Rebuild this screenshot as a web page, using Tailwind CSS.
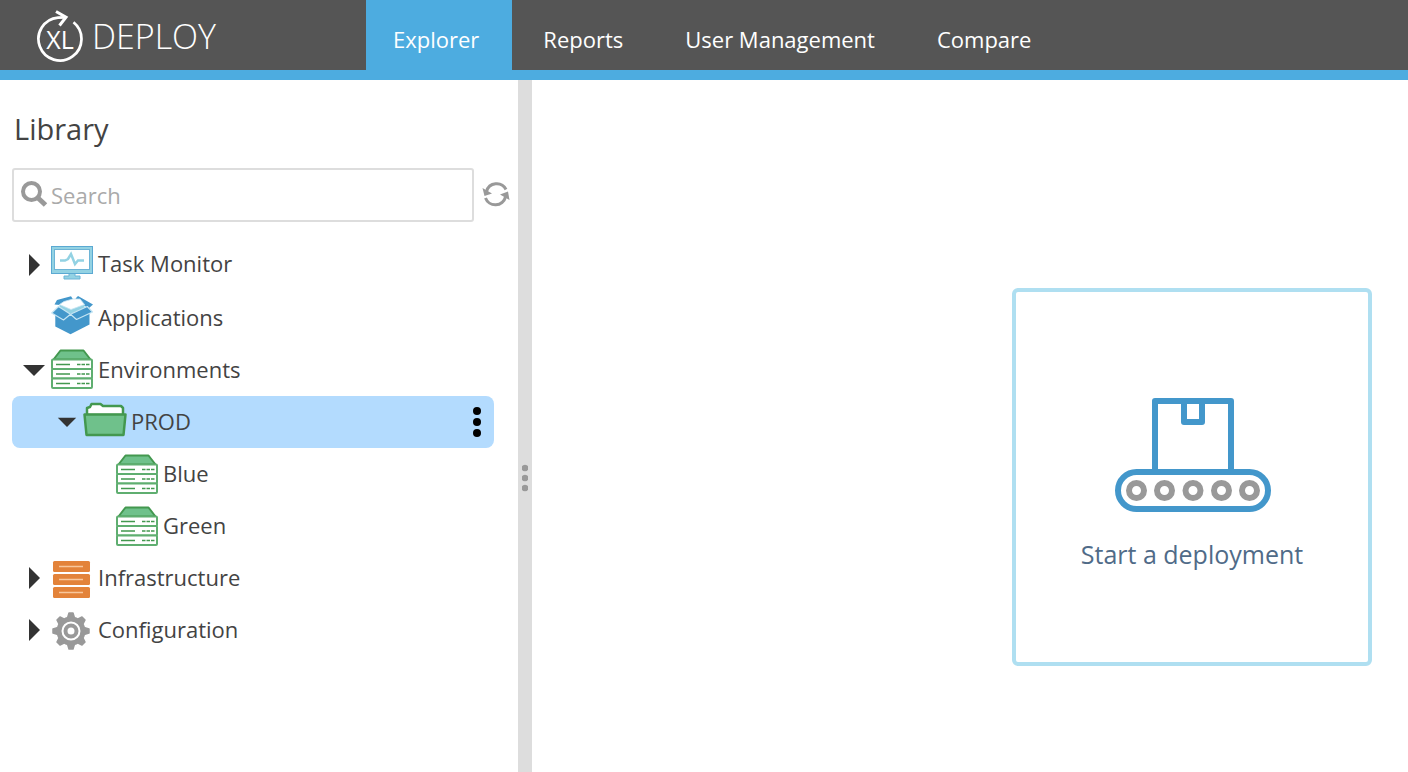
<!DOCTYPE html>
<html lang="en">
<head>
<meta charset="utf-8">
<meta name="viewport" content="width=device-width, initial-scale=1">
<title>XL Deploy</title>
<script src="https://cdn.jsdelivr.net/npm/@tailwindcss/browser@4"></script>
</head>
<body class="flex min-h-screen flex-col bg-white font-['Open_Sans',sans-serif] text-[22px] text-[#434343]">
<svg class="hidden" aria-hidden="true">
  <symbol id="servers" viewBox="0 0 43 40">
    <path d="M2.500 10.500 9.500 1.500h23L39.500 10.500z" fill="#6fc18b" stroke="#43984f" stroke-width="2" stroke-linejoin="round"/>
    <g fill="#fff" stroke="#5fae70" stroke-width="2">
      <rect x="1" y="10.500" width="40" height="9.500" rx="1"/>
      <rect x="1" y="20" width="40" height="9.500" rx="1"/>
      <rect x="1" y="29.500" width="40" height="9.500" rx="1"/>
    </g>
    <path d="M5 15.500h14M5 25h14M5 34.500h14" stroke="#43984f" stroke-width="1.700"/>
    <path d="M26 15.500h13M26 25h13M26 34.500h13" stroke="#43984f" stroke-width="1.700" stroke-dasharray="3.500 1"/>
  </symbol>
  <symbol id="right" viewBox="0 0 24 24"><path d="M7 1v22l11-11z" fill="#333"/></symbol>
  <symbol id="down" viewBox="0 0 24 24"><path d="M1 7h22L12 18z" fill="#333"/></symbol>
</svg>

<header class="flex h-20 border-b-[10px] border-[#4dace0] bg-[#555]">
  <a href="#" aria-label="XL Deploy" class="flex w-[366px] shrink-0 items-center pl-9 text-white">
    <svg class="h-[70px] w-12" viewBox="0 0 48 70" fill="none" stroke="#fff" stroke-width="2.700">
      <path d="M37.500 22.300A21.500 21.500 0 1 1 22 17.600L29 17.300"/>
      <path d="M20 11.500 30 17.300 23.500 25.500" stroke-width="3"/>
      <text x="24" y="49" text-anchor="middle" font-size="25" fill="#fff" stroke="none">XL</text>
    </svg>
    <span class="pl-2 pt-0.5 text-[34px] leading-none font-light">DEPLOY</span>
  </a>
  <nav class="flex items-stretch font-medium text-white" aria-label="Main">
    <a href="#" aria-current="page" class="flex items-center bg-[#4dace0] pt-2 pr-[33px] pl-[27px]">Explorer</a>
    <a href="#" class="flex items-center px-[31px] pt-2">Reports</a>
    <a href="#" class="flex items-center px-[31px] pt-2">User Management</a>
    <a href="#" class="flex items-center px-[31px] pt-2">Compare</a>
  </nav>
</header>

<div class="flex flex-1">
  <aside class="w-[518px] shrink-0 pt-[27px]">
    <h1 class="pl-3.5 text-[29px] leading-[44px]">Library</h1>
    <div class="mt-[17px] flex items-center gap-2 pr-2 pl-3">
      <div class="flex h-[54px] flex-1 items-center rounded-[3px] border-2 border-[#ddd] pl-[7px]">
        <svg class="size-7 shrink-0" viewBox="0 0 28 28" fill="none" stroke="#999" aria-hidden="true"><circle cx="10.500" cy="10.500" r="8.500" stroke-width="4"/><path d="m16.500 16.500 8 7.500" stroke-width="5"/></svg>
        <input type="search" aria-label="Search" placeholder="Search" class="min-w-0 flex-1 pl-0.5 outline-none placeholder:text-[#aaa]">
      </div>
      <button type="button" aria-label="Refresh" class="mb-0.5 size-7">
        <svg viewBox="0 0 28 28" fill="none" stroke="#999" stroke-width="3"><path d="M4.500 11.500A10.500 10.500 0 0 1 24 9.500M23.500 17A10.500 10.500 0 0 1 3.500 18"/><path d="M.500 8 2.500 16l7.500-2.500zM27.500 20l-1.500-8.500-8 3z" fill="#999" stroke="none"/></svg>
      </button>
    </div>

    <ul class="mt-4 pr-6 pl-3 leading-[30px]">
      <li class="flex h-[54px] items-center pl-2.5">
        <button type="button" aria-label="Expand Task Monitor" class="mr-[5px] size-6"><svg viewBox="0 0 24 24"><use href="#right"/></svg></button>
        <svg class="mr-1 h-10 w-[43px]" viewBox="0 0 43 40" aria-hidden="true">
          <path d="M18 28h6v3h5v3H13v-3h5z" fill="#93d2e3" stroke="#6db4d6"/>
          <rect x=".5" y="1.500" width="41" height="27" fill="#93d2e3" stroke="#5ba9d2"/>
          <rect x="3.500" y="4.500" width="35" height="20" fill="#fff" stroke="#6db4d6"/>
          <path d="M9 15.500h5l3-1.500 3-5 4 10 3-3.500h6" fill="none" stroke="#93d2e3" stroke-width="2.500"/>
        </svg>
        <span class="pb-1">Task Monitor</span>
      </li>
      <li class="flex h-[52px] items-center pl-[39px]">
        <svg class="mr-1 mb-1 h-10 w-[43px]" viewBox="0 0 43 40" aria-hidden="true">
          <path d="M3.500 8.500 6 4 20 .300l2 3L9 9zM24.500 2.500 27 0l15 8.500-4.500 4L31 8z" fill="#4397cb"/>
          <path d="M8.500 8v6l11 6L33.500 13V8z" fill="#93d2e3"/>
          <path d="M8.500 8.500 13 5.500 22 3h7l4.500 5.500L20 13.500z" fill="#fff" stroke="#c6e5f3" stroke-width=".8"/>
          <path d="M4.300 18 19.500 17.500 38.500 16v12.500L19.500 38.300 4.300 30.500z" fill="#4397cb"/>
          <path d="M7.500 10.500 19.500 18.300 12.500 24 .700 17zM19.500 18.300 36.300 10.500l5.200 5.500L25.500 23.500z" fill="#4397cb" stroke="#c6e5f3" stroke-width="1.200" stroke-linejoin="round"/>
        </svg>
        <span class="pb-0.5">Applications</span>
      </li>
      <li>
        <div class="flex h-[52px] items-center pl-2.5">
          <button type="button" aria-label="Collapse Environments" aria-expanded="true" class="mr-[5px] size-6"><svg viewBox="0 0 24 24"><use href="#down"/></svg></button>
          <svg class="mr-1 mb-0.5 h-10 w-[43px]" aria-hidden="true"><use href="#servers"/></svg>
          <span class="pb-0.5">Environments</span>
        </div>
        <ul>
          <li>
            <div class="flex h-[52px] items-center rounded-lg bg-[#b3dbfe] pr-2 pl-[43px]">
              <button type="button" aria-label="Collapse PROD" aria-expanded="true" class="mr-1 size-6 p-0.5"><svg viewBox="0 0 24 24"><use href="#down"/></svg></button>
              <svg class="mr-1 mb-1 h-9 w-11" viewBox="0 0 44 36" aria-hidden="true">
                <path d="M4 13V6l3-1 1.500-3h9L20 4h18l2 2v7z" fill="#fff" stroke="#43984f" stroke-width="2.500" stroke-linejoin="round"/>
                <path d="M1.500 12.500h41l-2 20.500h-37z" fill="#6fc18b" stroke="#43984f" stroke-width="2.500" stroke-linejoin="round"/>
              </svg>
              <span class="pb-0.5">PROD</span>
              <button type="button" aria-label="PROD actions" class="ml-auto h-8 w-[18px]"><svg viewBox="0 0 18 32"><circle cx="9" cy="5" r="4"/><circle cx="9" cy="16" r="4"/><circle cx="9" cy="27" r="4"/></svg></button>
            </div>
            <ul>
              <li class="flex h-[52px] items-center pl-[104px]"><svg class="mr-1 h-10 w-[43px]" aria-hidden="true"><use href="#servers"/></svg><span class="pb-0.5">Blue</span></li>
              <li class="flex h-[52px] items-center pl-[104px]"><svg class="mr-1 h-10 w-[43px]" aria-hidden="true"><use href="#servers"/></svg><span class="pb-0.5">Green</span></li>
            </ul>
          </li>
        </ul>
      </li>
      <li class="flex h-[52px] items-center pl-2.5">
        <button type="button" aria-label="Expand Infrastructure" class="mr-[5px] size-6"><svg viewBox="0 0 24 24"><use href="#right"/></svg></button>
        <svg class="mr-1 h-10 w-[43px]" viewBox="0 0 43 40" aria-hidden="true">
          <g fill="#e3833a"><rect x="2" y="3" width="37" height="11" rx="1.500"/><rect x="2" y="16" width="37" height="11" rx="1.500"/><rect x="2" y="29" width="37" height="11" rx="1.500"/></g>
          <path d="M8 8.500h24M8 21.500h24M8 34.500h24" stroke="#f8c79c" stroke-width="1.700"/>
        </svg>
        <span class="pb-0.5">Infrastructure</span>
      </li>
      <li class="flex h-[52px] items-center pl-2.5">
        <button type="button" aria-label="Expand Configuration" class="mr-[5px] size-6"><svg viewBox="0 0 24 24"><use href="#right"/></svg></button>
        <svg class="mr-1 h-10 w-[43px]" viewBox="0 0 43 40" aria-hidden="true">
          <g transform="translate(20 21)" fill="none" stroke="#999" stroke-linejoin="round">
            <path d="M-2-18h4l1.500 5h-7zM-2 18h4l1.500-5h-7zM-18-2v4l5 1.500v-7zM18-2v4l-5 1.500v-7zM-14-11l3-3 4 2-5 5zM14-11l-3-3-4 2 5 5zM-14 11l3 3 4-2-5-5zM14 11l-3 3-4-2 5-5z" fill="#999" stroke-width="1.500"/>
            <circle r="12" stroke-width="5"/><circle r="5.500" stroke-width="4"/>
          </g>
        </svg>
        <span class="pb-0.5">Configuration</span>
      </li>
    </ul>
  </aside>

  <div role="separator" aria-orientation="vertical" class="flex w-3.5 shrink-0 flex-col items-center justify-center bg-[#ddd] pt-26">
    <svg class="h-7 w-1.5" viewBox="0 0 6 28" fill="#999"><circle cx="3" cy="4" r="3.300"/><circle cx="3" cy="14" r="3.300"/><circle cx="3" cy="24" r="3.300"/></svg>
  </div>

  <main class="flex flex-1 items-start justify-end pt-52 pr-9">
    <button type="button" class="flex h-[378px] w-[360px] flex-col items-center rounded-md border-4 border-[#afdff1] pt-[105px] text-[25px] text-[#506b88]">
      <svg class="h-[116px] w-40" viewBox="-2 0 160 116" fill="none" stroke="#4397cb" stroke-width="6" aria-hidden="true">
        <path d="M41 74V4h76v70" stroke-linejoin="round"/>
        <path d="M70 4v21h18V4" stroke-linejoin="round"/>
        <rect x="4" y="75" width="150" height="37" rx="18.500"/>
        <g stroke="#999"><circle cx="22.500" cy="93.500" r="7.500"/><circle cx="50.500" cy="93.500" r="7.500"/><circle cx="79" cy="93.500" r="7.500"/><circle cx="107.500" cy="93.500" r="7.500"/><circle cx="135.500" cy="93.500" r="7.500"/></g>
      </svg>
      <span class="mt-[23px] leading-9">Start a deployment</span>
    </button>
  </main>
</div>
</body>
</html>
